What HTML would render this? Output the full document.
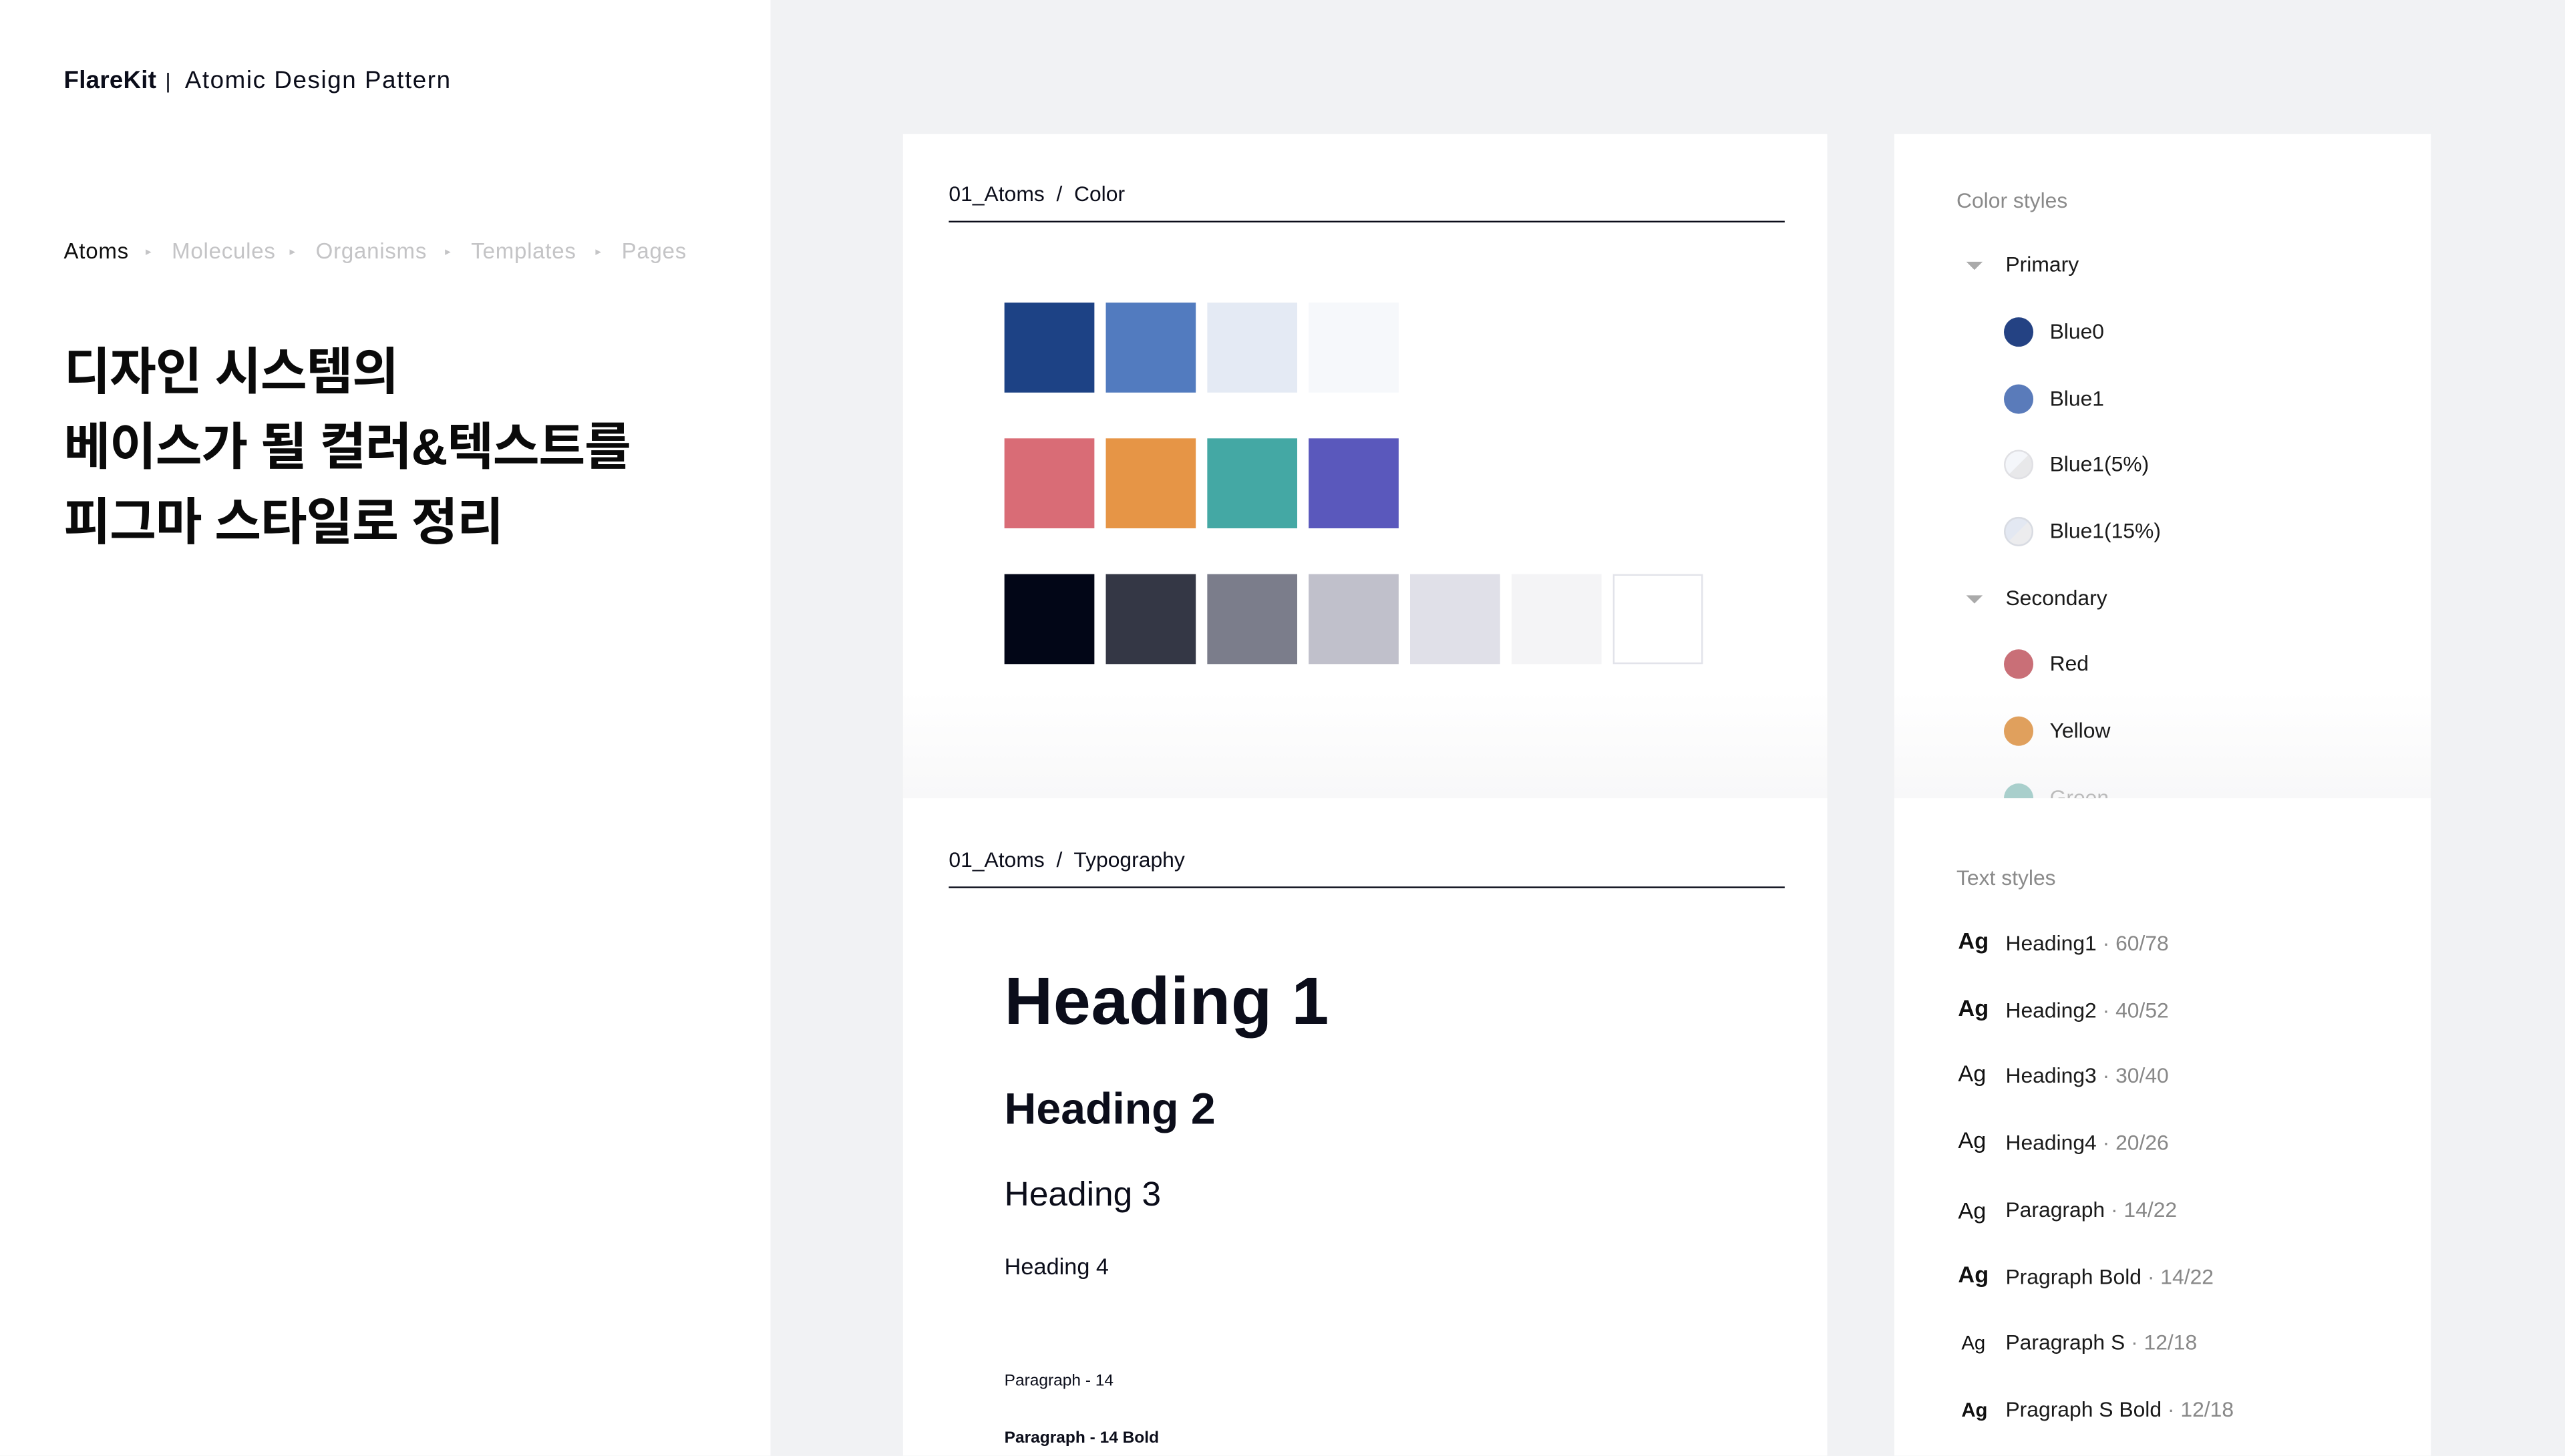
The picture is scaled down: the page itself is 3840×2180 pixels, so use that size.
<!DOCTYPE html>
<html><head><meta charset="utf-8">
<style>
html,body{margin:0;padding:0;width:3840px;height:2160px;overflow:hidden;background:#f1f2f4}
#w{position:absolute;left:0;top:0;width:1568px;height:890px;transform:scale(2.44898);transform-origin:0 0;font-family:"Liberation Sans","Noto Sans CJK KR",sans-serif;color:#0b0d1a}
.a{position:absolute;white-space:nowrap}
.left{position:absolute;left:0;top:0;width:471px;height:890px;background:#fff}
.card{position:absolute;background:#fff}
.fade{background:linear-gradient(#fff 0,#fff 340px,#f8f8f9 406px)}
.sw{position:absolute;width:55px;height:55px;box-sizing:border-box}
.dot{position:absolute;width:18px;height:18px;border-radius:50%;left:1225px}
.lbl{position:absolute;left:1253px;font-size:13px;color:#1a1a1a;line-height:16px}
.tri{position:absolute;left:1202px;width:0;height:0;border-left:5px solid transparent;border-right:5px solid transparent;border-top:5px solid #aaa}
.ag{position:absolute;left:1197px;font-size:14px;color:#111}
.ts{position:absolute;left:1226px;font-size:13px;color:#1a1a1a}
.ts span{color:#888}
.bc{position:absolute;top:146px;font-size:13.5px;color:#c4c4c6;letter-spacing:0.3px;white-space:nowrap}
.sep{position:absolute;top:150px;font-size:7px;color:#c4c4c6}
</style></head><body><div id="w">
<div class="left"></div>
<div class="a" style="left:39px;top:41px;font-size:15px;font-weight:bold;letter-spacing:0.1px">FlareKit</div>
<div class="a" style="left:101px;top:42px;font-size:13px">|</div>
<div class="a" style="left:113px;top:41px;font-size:15px;letter-spacing:0.65px">Atomic Design Pattern</div>
<div class="bc" style="left:39px;color:#111">Atoms</div>
<div class="sep" style="left:89px">▸</div>
<div class="bc" style="left:105px">Molecules</div>
<div class="sep" style="left:177px">▸</div>
<div class="bc" style="left:193px">Organisms</div>
<div class="sep" style="left:272px">▸</div>
<div class="bc" style="left:288px">Templates</div>
<div class="sep" style="left:364px">▸</div>
<div class="bc" style="left:380px">Pages</div>
<div class="a" style="left:39px;top:205px;font-size:31px;font-weight:bold;line-height:46px;letter-spacing:-0.5px;color:#0a0a0a">디자인 시스템의<br>베이스가 될 컬러&amp;텍스트를<br>피그마 스타일로 정리</div>

<div class="card fade" style="left:552px;top:82px;width:565px;height:406px"></div>
<div class="card" style="left:552px;top:488px;width:565px;height:402px"></div>
<div class="card fade" style="left:1158px;top:82px;width:328px;height:406px"></div>
<div class="card" style="left:1158px;top:488px;width:328px;height:402px"></div>

<div class="a" style="left:580px;top:111px;font-size:13px">01_Atoms &nbsp;/&nbsp; Color</div>
<div class="a" style="left:580px;top:135px;width:511px;height:1px;background:#0b0d1a"></div>

<div class="sw" style="left:614px;top:185px;background:#1d4285"></div>
<div class="sw" style="left:676px;top:185px;background:#527bbf"></div>
<div class="sw" style="left:738px;top:185px;background:#e4eaf4"></div>
<div class="sw" style="left:800px;top:185px;background:#f6f8fb"></div>
<div class="sw" style="left:614px;top:268px;background:#d96c76"></div>
<div class="sw" style="left:676px;top:268px;background:#e69546"></div>
<div class="sw" style="left:738px;top:268px;background:#44a8a4"></div>
<div class="sw" style="left:800px;top:268px;background:#5a58bc"></div>
<div class="sw" style="left:614px;top:351px;background:#020617"></div>
<div class="sw" style="left:676px;top:351px;background:#343745"></div>
<div class="sw" style="left:738px;top:351px;background:#7b7d8b"></div>
<div class="sw" style="left:800px;top:351px;background:#c0c0cb"></div>
<div class="sw" style="left:862px;top:351px;background:#e0e0e8"></div>
<div class="sw" style="left:924px;top:351px;background:#f4f4f6"></div>
<div class="sw" style="left:986px;top:351px;background:#fff;border:1px solid #e2e3ea"></div>

<div class="a" style="left:580px;top:518px;font-size:13px">01_Atoms &nbsp;/&nbsp; Typography</div>
<div class="a" style="left:580px;top:542px;width:511px;height:1px;background:#0b0d1a"></div>
<div class="a" style="left:614px;top:589px;font-size:41px;font-weight:bold;letter-spacing:0.3px">Heading 1</div>
<div class="a" style="left:614px;top:663px;font-size:27px;font-weight:bold">Heading 2</div>
<div class="a" style="left:614px;top:719px;font-size:21px">Heading 3</div>
<div class="a" style="left:614px;top:766px;font-size:14px">Heading 4</div>
<div class="a" style="left:614px;top:839px;font-size:10px">Paragraph - 14</div>
<div class="a" style="left:614px;top:874px;font-size:10px;font-weight:bold">Paragraph - 14 Bold</div>

<div class="a" style="left:1196px;top:115px;font-size:13px;color:#8a8a8a">Color styles</div>
<div class="tri" style="top:160px"></div><div class="a" style="left:1226px;top:154px;font-size:13px;color:#1a1a1a">Primary</div>
<div class="dot" style="top:194px;background:#244283"></div><div class="lbl" style="top:195px">Blue0</div>
<div class="dot" style="top:235px;background:#5a7bba"></div><div class="lbl" style="top:236px">Blue1</div>
<div class="dot" style="top:275px;background:linear-gradient(135deg,#f4f6fa 50%,#e8e8ea 50%);box-shadow:inset 0 0 0 1px #e0e0e4"></div><div class="lbl" style="top:276px">Blue1(5%)</div>
<div class="dot" style="top:316px;background:linear-gradient(135deg,#e3e8f2 50%,#ececee 50%);box-shadow:inset 0 0 0 1px #d8dbe2"></div><div class="lbl" style="top:317px">Blue1(15%)</div>
<div class="tri" style="top:364px"></div><div class="a" style="left:1226px;top:358px;font-size:13px;color:#1a1a1a">Secondary</div>
<div class="dot" style="top:397px;background:#c96f77"></div><div class="lbl" style="top:398px">Red</div>
<div class="dot" style="top:438px;background:#e0a05d"></div><div class="lbl" style="top:439px">Yellow</div>
<div class="dot" style="top:479px;background:#a9cfcc;height:9px;border-radius:9px 9px 0 0"></div><div class="lbl" style="top:480px;color:#bbb;height:8px;overflow:hidden">Green</div>

<div class="a" style="left:1196px;top:529px;font-size:13px;color:#8a8a8a">Text styles</div>
<div class="ag" style="top:567px;font-weight:bold">Ag</div><div class="ts" style="top:569px">Heading1 <span>· 60/78</span></div>
<div class="ag" style="top:608px;font-weight:bold">Ag</div><div class="ts" style="top:610px">Heading2 <span>· 40/52</span></div>
<div class="ag" style="top:648px">Ag</div><div class="ts" style="top:650px">Heading3 <span>· 30/40</span></div>
<div class="ag" style="top:689px">Ag</div><div class="ts" style="top:691px">Heading4 <span>· 20/26</span></div>
<div class="ag" style="top:732px">Ag</div><div class="ts" style="top:732px">Paragraph <span>· 14/22</span></div>
<div class="ag" style="top:771px;font-weight:bold">Ag</div><div class="ts" style="top:773px">Pragraph Bold <span>· 14/22</span></div>
<div class="ag" style="top:814px;left:1199px;font-size:12px">Ag</div><div class="ts" style="top:813px">Paragraph S <span>· 12/18</span></div>
<div class="ag" style="top:855px;left:1199px;font-size:12px;font-weight:bold">Ag</div><div class="ts" style="top:854px">Pragraph S Bold <span>· 12/18</span></div>
</div></body></html>
